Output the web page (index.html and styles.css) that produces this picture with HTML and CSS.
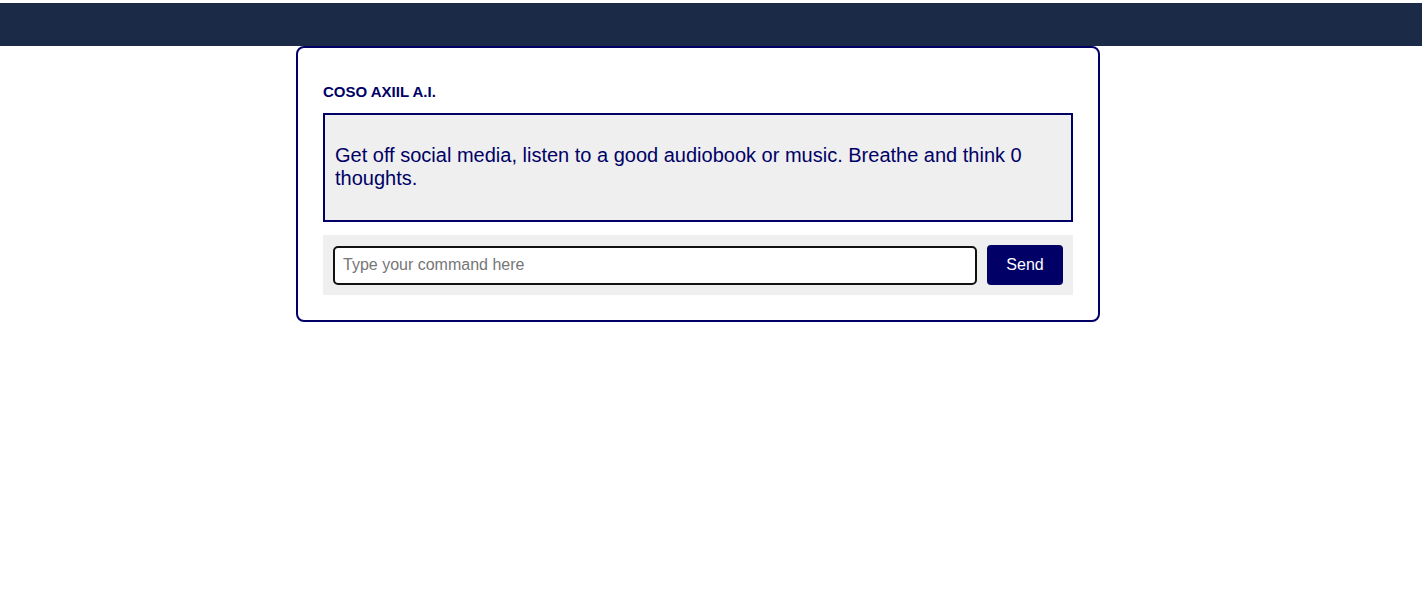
FILE: index.html
```html
<!DOCTYPE html>
<html>
<head>
<meta charset="utf-8">
<link rel="stylesheet" href="styles.css">
</head>
<body>
<header class="topbar"></header>
<main class="page">
  <section class="card">
    <h2 class="title">COSO AXIIL A.I.</h2>
    <div class="response">
      <p>Get off social media, listen to a good audiobook or music. Breathe and think 0 thoughts.</p>
    </div>
    <form class="command">
      <input class="command-input" type="text" placeholder="Type your command here">
      <button class="send" type="button">Send</button>
    </form>
  </section>
</main>
</body>
</html>
```
FILE: styles.css
```css
html, body {
  margin: 0;
  padding: 0;
  background: #ffffff;
  font-family: "Liberation Sans", Arial, sans-serif;
}
.topbar {
  margin-top: 3px;
  height: 43px;
  background: #1b2a46;
}
.page {
  padding-left: 296px;
}
.card {
  width: 750px;
  border: 2px solid #000066;
  border-radius: 8px;
  padding: 25px;
  background: #fff;
}
.title {
  margin: 11px 0 13px 0;
  font-size: 15px;
  line-height: 16px;
  font-weight: bold;
  color: #000066;
}
.response {
  background: #efefef;
  border: 2px solid #000066;
  padding: 29px 10px 30px 10px;
  color: #000066;
}
.response p {
  margin: 0;
  font-size: 20px;
  line-height: 23px;
}
.command {
  margin-top: 13px;
  background: #efefef;
  padding: 10px;
  display: flex;
  gap: 10px;
  align-items: center;
}
.command-input {
  flex: 1;
  height: 39px;
  box-sizing: border-box;
  border: 2px solid #111;
  border-radius: 5px;
  padding: 0 8px;
  font-family: "Liberation Sans", Arial, sans-serif;
  font-size: 16px;
  background: #fff;
  outline: none;
}
.command-input::placeholder {
  color: #767676;
}
.send {
  width: 76px;
  height: 40px;
  border: none;
  border-radius: 4px;
  background: #000066;
  color: #fff;
  font-family: "Liberation Sans", Arial, sans-serif;
  font-size: 16px;
}
```
